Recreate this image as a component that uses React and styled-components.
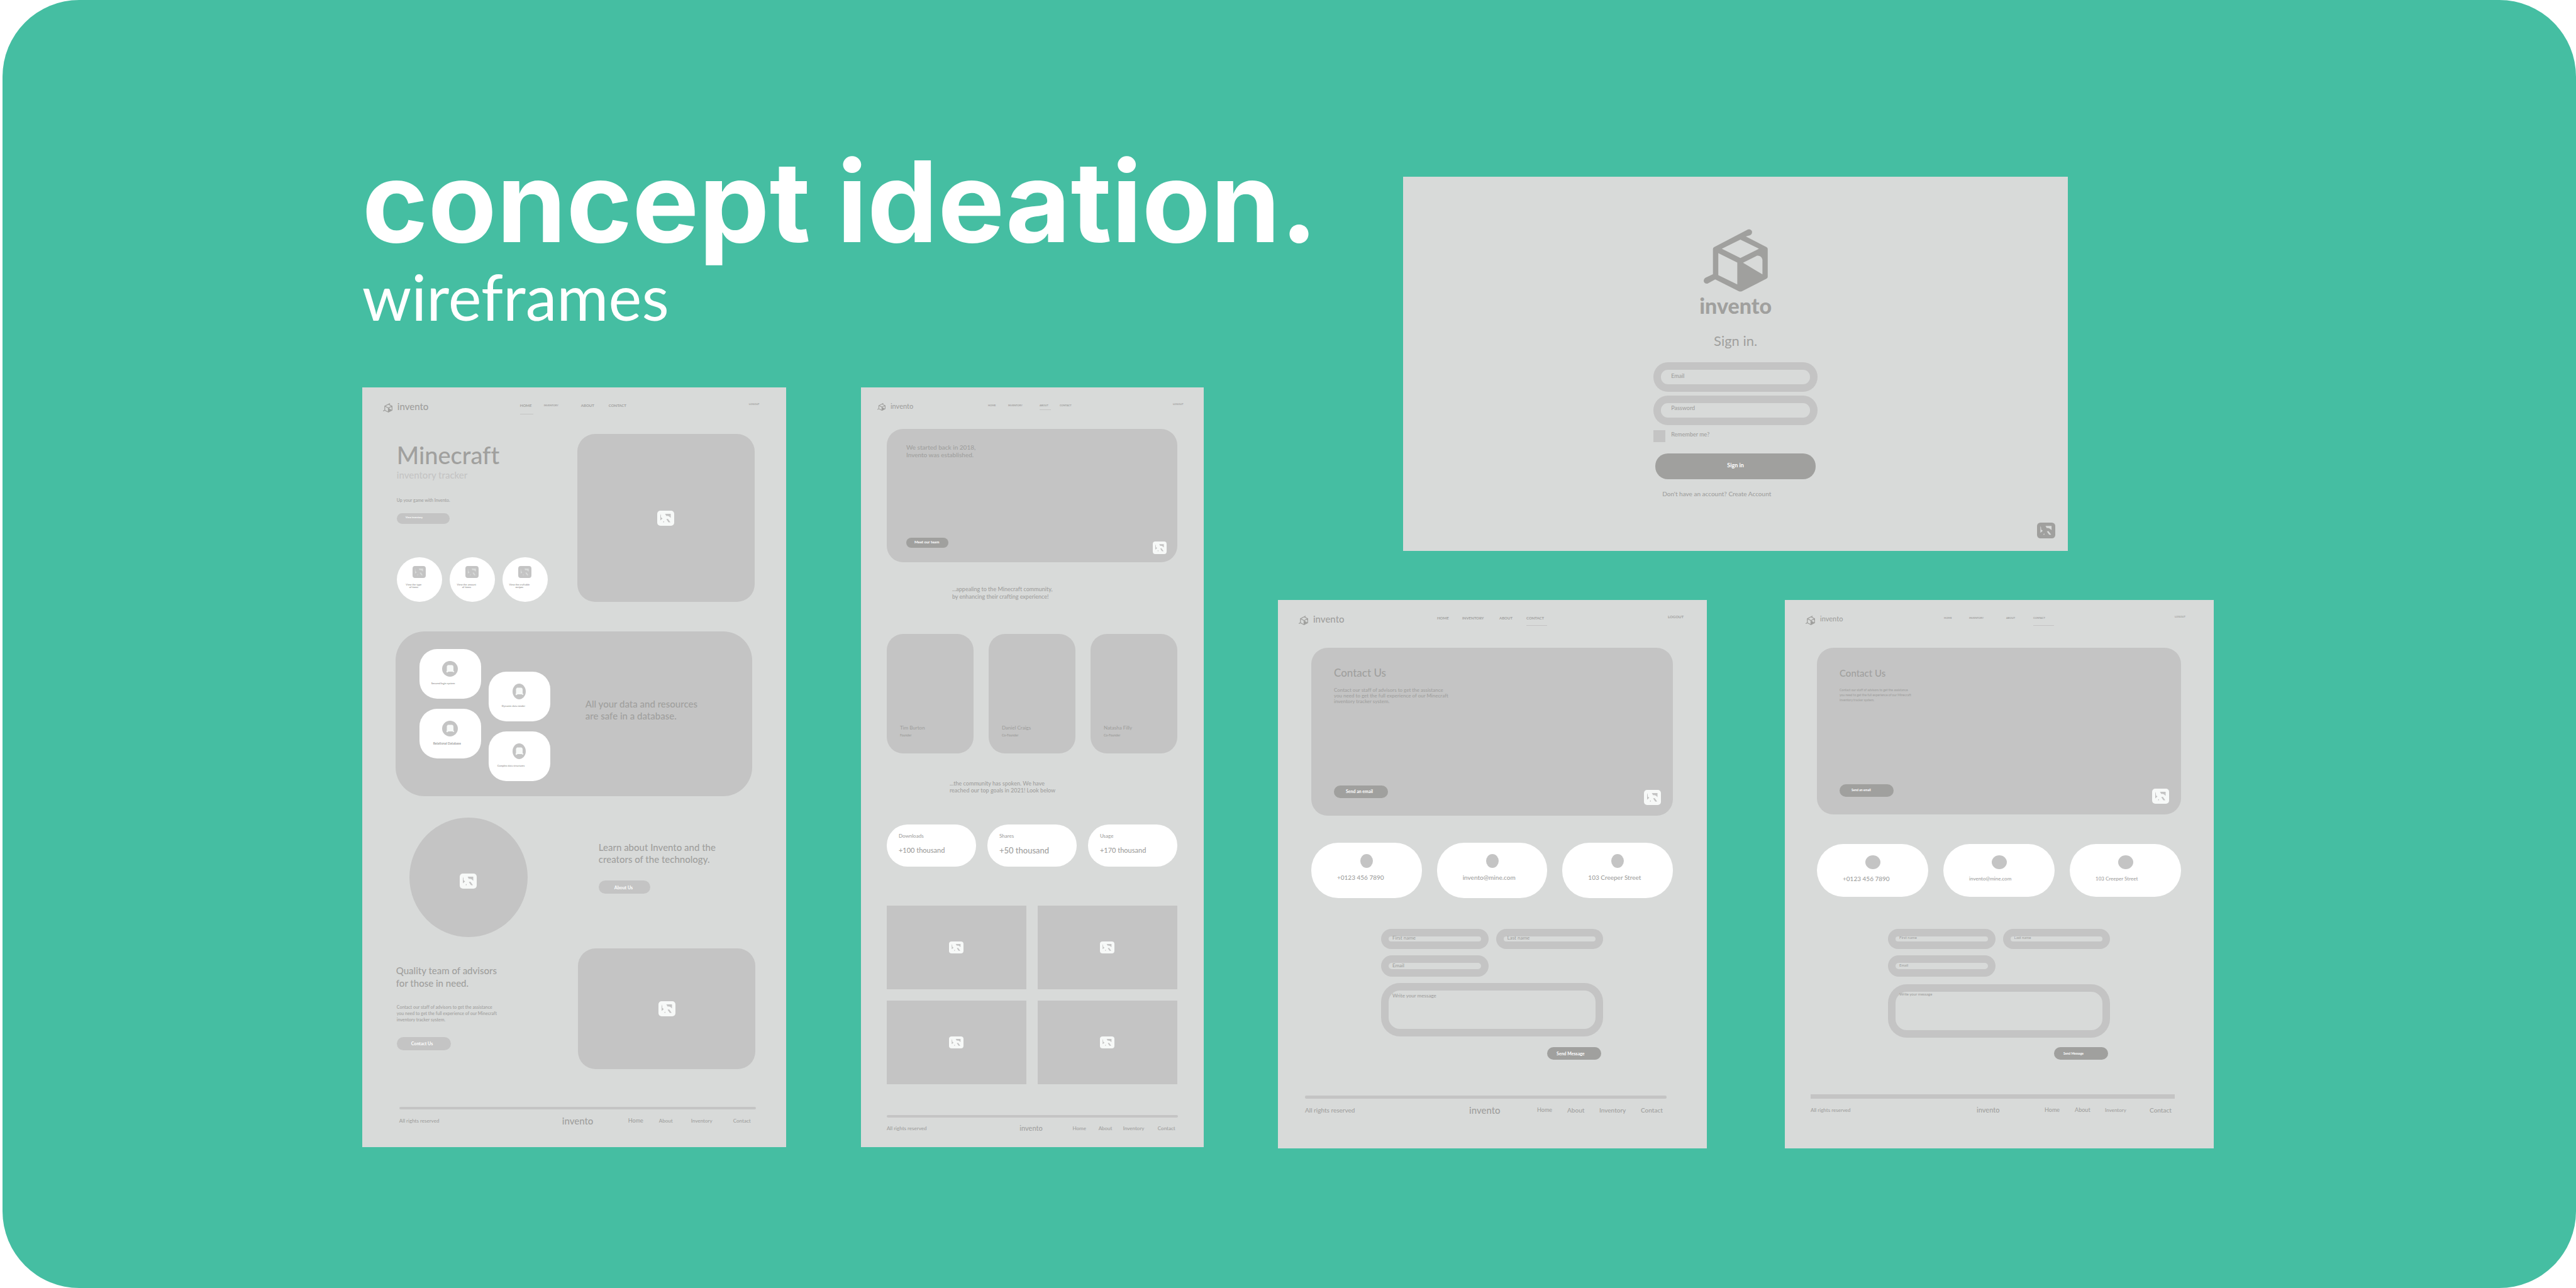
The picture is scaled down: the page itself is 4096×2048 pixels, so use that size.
import React from "react";
import styled, { createGlobalStyle, css } from "styled-components";

const c = {
  green: "#45bea2",
  sheet: "#d8dad9",
  block: "#c4c4c4",
  ink: "#a0a09e",
  soft: "#f7f9f8",
  white: "#ffffff",
};

const Global = createGlobalStyle`
  *, *::before, *::after { box-sizing: border-box; }
  body {
    margin: 0;
    background: ${c.white};
    color: ${c.ink};
    font-family: Lato, "Open Sans", sans-serif;
    font-weight: 500;
    font-variant-ligatures: none;
  }
  h1, h2, h3, p { margin: 0; font-weight: 500; }
  a { color: inherit; text-decoration: none; }
  button, input, textarea { font-family: inherit; font-weight: inherit; }
`;

/* ---------- poster ---------- */

const Poster = styled.main`
  display: grid;
  grid-template-columns: minmax(0, 1338fr) minmax(0, 1488fr);
  column-gap: 4.01%;
  min-height: 100vh;
  margin-left: 4px;
  padding: 0 14.06% 0 13.96%;
  background: ${c.green};
  border-radius: 122px;
`;

const LeftSide = styled.section`
  padding-top: 223px;
`;

const RightSide = styled.section`
  padding-top: 281px;
`;

const Header = styled.header`
  color: ${c.white};
  white-space: nowrap;
  margin-bottom: 93px;
`;

const Title = styled.h1`
  && { font-weight: 700; }
  font-family: Inter, Lato, sans-serif;
  font-size: 178px;
  line-height: 196px;
`;

const Subtitle = styled.p`
  && { font-weight: 400; }
  font-size: 100px;
  line-height: 104px;
`;

const LeftBoards = styled.div`
  display: grid;
  grid-template-columns: minmax(0, 674fr) minmax(0, 545fr);
  column-gap: 8.9%;
`;

const RightBoards = styled.div`
  display: grid;
  grid-template-columns: minmax(0, 1fr) minmax(0, 1fr);
  column-gap: 8.33%;
  margin-top: 78px;
`;

const Board = styled.article`
  display: flex;
  flex-direction: column;
  background: ${c.sheet};
`;

/* ---------- text ---------- */

const Text = styled.p`
  font-size: ${(p) => p.$size}px;
  line-height: ${(p) => p.$line}px;
  margin-top: ${(p) => p.$top || 0}px;
  padding-left: ${(p) => p.$indent || 0}px;
  color: ${(p) => p.$color || c.ink};
  white-space: pre-line;
  && { font-weight: ${(p) => p.$weight || 500}; }
`;

/* ---------- nav ---------- */

const NavBar = styled.nav`
  display: grid;
  grid-template-columns: ${(p) => p.$cols};
  align-items: start;
  height: ${(p) => p.$height}px;
  padding: 21px 0 0 ${(p) => p.$left}px;
`;

const Brand = styled.a`
  display: flex;
  align-items: flex-start;
  gap: 8px;
  font-size: ${(p) => p.$size}px;
  line-height: 18px;

  svg { margin-top: 4px; }
`;

const NavLink = styled.a`
  justify-self: start;
  margin-top: ${(p) => (p.$raised ? 2 : 4)}px;
  font-size: ${(p) => p.$size}px;
  line-height: 8px;
  font-weight: 700;
  ${(p) =>
    p.$active &&
    css`
      padding: 0 ${p.$extend}px ${p.$drop}px 0;
      border-bottom: 1px solid ${c.block};
    `}
`;

/* ---------- shared parts ---------- */

const Pill = styled.button`
  display: flex;
  align-items: center;
  align-self: ${(p) => p.$align || "flex-start"};
  width: ${(p) => p.$w}px;
  height: ${(p) => p.$h}px;
  margin: ${(p) => p.$margin || "0"};
  padding: 0 0 ${(p) => p.$lift || 0}px ${(p) => p.$left}px;
  border: 0;
  border-radius: ${(p) => p.$h / 2}px;
  background: ${(p) => (p.$dark ? c.ink : c.block)};
  color: ${c.white};
  font-size: ${(p) => p.$size}px;
  line-height: 10px;
  font-weight: 700;
  white-space: nowrap;
`;

const Picture = styled.div`
  display: flex;
  align-items: center;
  justify-content: center;
  height: ${(p) => p.$h}px;
  border-radius: ${(p) => p.$r || 0}px;
  background: ${c.block};
`;

const FooterBox = styled.footer`
  margin: ${(p) => p.$top}px ${(p) => p.$right}px ${(p) => p.$bottom}px ${(p) => p.$left}px;
`;

const Rule = styled.hr`
  height: ${(p) => p.$h}px;
  margin: 0 0 ${(p) => p.$gap}px;
  border: 0;
  border-radius: ${(p) => (p.$h > 5 ? 0 : 2)}px;
  background: ${c.block};
`;

const FooterRow = styled.div`
  display: grid;
  grid-template-columns: ${(p) => p.$cols};
  line-height: 18px;
  white-space: nowrap;
`;

const FooterItem = styled.a`
  font-size: ${(p) => p.$size}px;
`;

/* ---------- home board ---------- */

const HomeHero = styled.section`
  display: grid;
  grid-template-columns: 287fr 282fr;
  padding: 0 50px 0 55px;
`;

const Column = styled.div`
  display: flex;
  flex-direction: column;
  padding-top: ${(p) => p.$top}px;
`;

const Bubbles = styled.div`
  display: flex;
  gap: 12px;
  margin-top: 53px;
`;

const Bubble = styled.div`
  display: flex;
  flex-direction: column;
  align-items: center;
  width: 72px;
  height: 71px;
  padding-top: 14px;
  border-radius: 50%;
  background: ${c.white};
`;

const BubbleText = styled.p`
  margin-top: 9px;
  padding-right: 18px;
  font-size: 4px;
  line-height: 4px;
  text-align: center;
  white-space: pre;
  && { font-weight: 700; }
`;

const DataPanel = styled.section`
  display: flex;
  gap: 12px;
  height: 262px;
  margin: 47px 54px 0 53px;
  padding-left: 38px;
  border-radius: 46px;
  background: ${c.block};
`;

const TileColumn = styled.div`
  display: flex;
  flex-direction: column;
  gap: 16px;
  padding-top: ${(p) => p.$top}px;
`;

const Tile = styled.div`
  display: flex;
  flex-direction: column;
  align-items: center;
  width: 98px;
  height: 79px;
  padding-top: 19px;
  border-radius: 28px;
  background: ${c.white};
`;

const TileDisc = styled.span`
  display: flex;
  align-items: center;
  justify-content: center;
  width: ${(p) => p.$w}px;
  height: 25px;
  border-radius: 50%;
  background: ${c.block};
`;

const TileText = styled.p`
  align-self: flex-start;
  margin-top: 8px;
  padding-left: ${(p) => p.$left}px;
  font-size: ${(p) => p.$size}px;
  line-height: 6px;
  && { font-weight: 700; }
`;

const AboutRow = styled.section`
  display: flex;
  gap: 113px;
  margin-top: 34px;
  padding-left: 75px;
`;

const Disc = styled.div`
  display: flex;
  align-items: center;
  justify-content: center;
  width: 188px;
  height: 190px;
  padding-top: 11px;
  border-radius: 50%;
  background: ${c.block};
`;

const TeamRow = styled.section`
  display: grid;
  grid-template-columns: 290fr 282fr;
  margin-top: 18px;
  padding: 0 49px 0 54px;
`;

/* ---------- about and contact boards ---------- */

const Hero = styled.section`
  display: flex;
  flex-direction: column;
  justify-content: space-between;
  height: ${(p) => p.$h}px;
  margin: 0 ${(p) => p.$side + 1}px 0 ${(p) => p.$side}px;
  padding: ${(p) => p.$pad};
  border-radius: 26px;
  background: ${c.block};
`;

const HeroFoot = styled.div`
  display: flex;
  align-items: flex-end;
  justify-content: space-between;
`;

const Cards = styled.section`
  display: grid;
  grid-template-columns: repeat(${(p) => p.$n}, minmax(0, 1fr));
  gap: ${(p) => p.$gap}px;
  margin: ${(p) => p.$top}px ${(p) => p.$side + 1}px 0 ${(p) => p.$side}px;
`;

const Person = styled.div`
  display: flex;
  flex-direction: column;
  justify-content: flex-end;
  gap: 2px;
  height: 190px;
  padding: 0 0 25px 21px;
  border-radius: 26px;
  background: ${c.block};
`;

const Stat = styled.div`
  height: 67px;
  padding: 13px 0 0 19px;
  border-radius: 33px;
  background: ${c.white};
`;

const Contact = styled.div`
  display: flex;
  flex-direction: column;
  height: ${(p) => p.$h}px;
  padding-top: 18px;
  border-radius: 43px;
  background: ${c.white};
`;

const Dot = styled.span`
  align-self: center;
  width: ${(p) => p.$w}px;
  height: 22px;
  border-radius: 50%;
  background: ${c.block};
`;

const Form = styled.form`
  display: grid;
  grid-template-columns: 1fr 1fr;
  gap: 10px 12px;
  margin-top: ${(p) => p.$top}px;
  padding: 0 165px 0 164px;
`;

const ringed = css`
  width: 100%;
  border: 0;
  outline: 0;
  background: transparent;
  box-shadow: inset 0 0 0 12px ${c.block};
  color: ${c.ink};
  font-size: ${(p) => p.$size}px;
  &::placeholder { color: ${c.ink}; opacity: 1; }
`;

const Field = styled.input`
  ${ringed}
  height: ${(p) => p.$h}px;
  padding: 0 18px ${(p) => p.$lift}px ${(p) => p.$left || 18}px;
  border-radius: ${(p) => Math.min(p.$h / 2, 23)}px;
`;

const Message = styled.textarea`
  ${ringed}
  grid-column: 1 / -1;
  display: block;
  height: 85px;
  margin-top: ${(p) => p.$top}px;
  padding: ${(p) => p.$pad}px 18px;
  border-radius: 30px;
  line-height: 10px;
  resize: none;
`;

/* ---------- sign-in board ---------- */

const SignBoard = styled(Board)`
  align-items: center;
  width: 71%;
  margin-left: 13.4%;
  padding: 83px 20px 20px;
`;

const SignForm = styled.form`
  display: flex;
  flex-direction: column;
  gap: 6px;
  width: 261px;
  margin-top: 21px;
`;

const Remember = styled.label`
  display: flex;
  gap: 9px;
  margin-top: 2px;
  font-size: 9px;
  line-height: 14px;
`;

const Tick = styled.input`
  appearance: none;
  width: 19px;
  height: 19px;
  margin: 0;
  background: ${c.block};
`;

const SignButton = styled.button`
  height: 41px;
  margin: 12px 3px 0;
  padding: 0 0 4px;
  border: 0;
  border-radius: 20px;
  background: ${c.ink};
  color: ${c.white};
  font-size: 9px;
  && { font-weight: 700; }
`;

const Account = styled.p`
  margin: 11px 0 0 14px;
  font-size: 10px;
  line-height: 12px;
  white-space: nowrap;
`;

const Corner = styled.div`
  display: flex;
  align-self: flex-end;
  margin-top: 40px;
`;

/* ---------- drawings ---------- */

function Logo({ w, h }) {
  return (
    <svg width={w} height={h} viewBox="0 0 102 100" preserveAspectRatio="none" aria-hidden="true">
      <path
        fill={c.ink}
        fillRule="evenodd"
        d="M14.7 32Q14.7 30 16.4 29L70 .9Q74-.6 76.5 3Q78 8 74 10L67 12L100 29Q101.8 30 101.8 32V76Q101.8 78 100 79L61 99Q58.3 100 55.6 99L18.3 80.2L6 87Q1 87.5 0 83Q0 79 3 77.5L14.7 72ZM28.8 31.6L58.3 46.2L87.8 31.5L58.3 16.9ZM23.2 38.5V73.4L53.4 88.3V53.4ZM62.5 53.8L93.4 72.2V49Q92 42 85 42.5Z"
      />
    </svg>
  );
}

function ImageIcon({ w, h, fill = c.soft, mark = c.block }) {
  return (
    <svg width={w} height={h} viewBox="0 0 27 24" preserveAspectRatio="none" aria-hidden="true">
      <rect width="27" height="24" rx="5" fill={fill} />
      <path
        fill={mark}
        d="M5 5Q6.5 8 6 10.5L8.5 12.5L5 15.5ZM12.5 5H21.5V11.5Q18 7 14.5 8.5ZM14.5 13.5L17 13L21 18.5H18ZM9.5 17.5L11 16.5V18.5H9.5Z"
      />
    </svg>
  );
}

function DataIcon() {
  return (
    <svg width="14" height="13" viewBox="0 0 14 13" aria-hidden="true">
      <path fill={c.soft} d="M3 .5H10Q12 1 12 3.5V9.5L13.5 11L12 12L10.5 11H4L2 12.5L.5 11L1.5 9.5V2.5Z" />
    </svg>
  );
}

/* ---------- composed parts ---------- */

function Nav({ height, left, cols, brand, logo, links, active, extend, drop, logout }) {
  return (
    <NavBar $height={height} $left={left} $cols={cols}>
      <Brand href="#" $size={brand}>
        <Logo w={logo[0]} h={logo[1]} />
        invento
      </Brand>
      {["HOME", "INVENTORY", "ABOUT", "CONTACT"].map((name, i) => (
        <NavLink key={name} href="#" $size={links[i]} $active={name === active} $extend={extend} $drop={drop}>
          {name}
        </NavLink>
      ))}
      <NavLink href="#" $size={logout} $raised>
        LOGOUT
      </NavLink>
    </NavBar>
  );
}

function Footer({ top, right, bottom, left, rule, gap, cols, sizes }) {
  return (
    <FooterBox $top={top} $right={right} $bottom={bottom} $left={left}>
      <Rule $h={rule} $gap={gap} />
      <FooterRow $cols={cols}>
        {["All rights reserved", "invento", "Home", "About", "Inventory", "Contact"].map((name, i) =>
          i === 0 ? (
            <FooterItem as="span" key={name} $size={sizes[i]}>{name}</FooterItem>
          ) : (
            <FooterItem href="#" key={name} $size={sizes[i]}>{name}</FooterItem>
          )
        )}
      </FooterRow>
    </FooterBox>
  );
}

const STAFF =
  "Contact our staff of advisors to get the assistance\nyou need to get the full experience of our Minecraft\ninventory tracker system.";

function HomeBoard() {
  return (
    <Board>
      <Nav height={74} left={33} cols="218fr 38fr 59fr 44fr 223fr 59fr" brand={15} logo={[15, 15]}
        links={[6, 4, 6, 6]} active="HOME" extend={3} drop={9} logout={4} />
      <HomeHero>
        <Column $top={11}>
          <Text as="h2" $size={38} $line={44}>Minecraft</Text>
          <Text $size={15} $line={18} $top={1} $color={c.block}>inventory tracker</Text>
          <Text $size={7} $line={10} $top={26}>Up your game with Invento.</Text>
          <Pill $w={84} $h={17} $left={14} $lift={3} $size={4} $margin="16px 0 0">View inventory</Pill>
          <Bubbles>
            {["View the type\nof items", "View the amount\nof items", "View the craftable\nrecipes"].map((t) => (
              <Bubble key={t}>
                <ImageIcon w={21} h={19} fill={c.block} mark={c.sheet} />
                <BubbleText>{t}</BubbleText>
              </Bubble>
            ))}
          </Bubbles>
        </Column>
        <Picture $h={267} $r={28}><ImageIcon w={27} h={24} /></Picture>
      </HomeHero>
      <DataPanel>
        <TileColumn $top={28}>
          <Tile>
            <TileDisc $w={25}><DataIcon /></TileDisc>
            <TileText $left={19} $size={4}>Secured login system</TileText>
          </Tile>
          <Tile>
            <TileDisc $w={25}><DataIcon /></TileDisc>
            <TileText $left={22} $size={5}>Relational Database</TileText>
          </Tile>
        </TileColumn>
        <TileColumn $top={64}>
          <Tile>
            <TileDisc $w={21}><DataIcon /></TileDisc>
            <TileText $left={21} $size={4}>Dynamic data render</TileText>
          </Tile>
          <Tile>
            <TileDisc $w={21}><DataIcon /></TileDisc>
            <TileText $left={14} $size={4}>Complex data structures</TileText>
          </Tile>
        </TileColumn>
        <Text as="h3" $size={15} $line={19} $top={106} $indent={44}>{"All your data and resources\nare safe in a database."}</Text>
      </DataPanel>
      <AboutRow>
        <Disc><ImageIcon w={27} h={24} /></Disc>
        <Column $top={38}>
          <Text as="h3" $size={15} $line={19}>{"Learn about Invento and the\ncreators of the technology."}</Text>
          <Pill $w={82} $h={21} $left={25} $size={7} $margin="24px 0 0">About Us</Pill>
        </Column>
      </AboutRow>
      <TeamRow>
        <Column $top={25}>
          <Text as="h3" $size={15} $line={20}>{"Quality team of advisors\nfor those in need."}</Text>
          <Text $size={7} $line={10} $top={23} $indent={1}>{STAFF}</Text>
          <Pill $w={86} $h={21} $left={23} $lift={2} $size={7} $margin="23px 0 0 1px">Contact Us</Pill>
        </Column>
        <Picture $h={192} $r={28}><ImageIcon w={27} h={24} /></Picture>
      </TeamRow>
      <Footer top={60} right={48} bottom={33} left={59} rule={4} gap={9}
        cols="259fr 105fr 49fr 51fr 67fr 36fr" sizes={[8, 15, 9, 8, 8, 8]} />
    </Board>
  );
}

function AboutBoard() {
  return (
    <Board>
      <Nav height={66} left={26} cols="176fr 32fr 50fr 32fr 180fr 49fr" brand={11} logo={[13, 12]}
        links={[4, 4, 4, 4]} active="ABOUT" extend={4} drop={2} logout={4} />
      <Hero $h={212} $side={41} $pad="23px 17px 13px 31px">
        <Text as="h2" $size={10} $line={12}>{"We started back in 2018,\nInvento was established."}</Text>
        <HeroFoot>
          <Pill $dark $align="flex-end" $w={67} $h={16} $left={13} $lift={2} $size={6} $margin="0 0 10px">Meet our team</Pill>
          <ImageIcon w={22} h={20} />
        </HeroFoot>
      </Hero>
      <Text $size={9} $line={12} $top={37} $indent={145}>{"...appealing to the Minecraft community,\nby enhancing their crafting experience!"}</Text>
      <Cards $n={3} $gap={24} $top={53} $side={41}>
        {[["Tim Burton", "Founder"], ["Daniel Craigs", "Co-Founder"], ["Natasha Filly", "Co-Founder"]].map(([n, r]) => (
          <Person key={n}>
            <Text $size={8} $line={12}>{n}</Text>
            <Text $size={5} $line={8} $weight={700}>{r}</Text>
          </Person>
        ))}
      </Cards>
      <Text $size={9} $line={11} $top={42} $indent={141}>{"...the community has spoken. We have\nreached our top goals in 2021! Look below"}</Text>
      <Cards $n={3} $gap={18} $top={49} $side={41}>
        {[["Downloads", "+100 thousand", 11], ["Shares", "+50 thousand", 13], ["Usage", "+170 thousand", 11]].map(([n, v, s]) => (
          <Stat key={n}>
            <Text $size={8} $line={10}>{n}</Text>
            <Text $size={s} $line={14} $top={11}>{v}</Text>
          </Stat>
        ))}
      </Cards>
      <Cards $n={2} $gap={18} $top={62} $side={41}>
        {[0, 1, 2, 3].map((i) => (
          <Picture key={i} $h={133}><ImageIcon w={23} h={19} /></Picture>
        ))}
      </Cards>
      <Footer top={49} right={41} bottom={20} left={41} rule={4} gap={8}
        cols="211fr 84fr 41fr 39fr 55fr 32fr" sizes={[8, 11, 8, 8, 8, 8]} />
    </Board>
  );
}

const LARGE = {
  brand: 15, nav: 6, side: 53, heroH: 267, title: 17, para: 8, paraLine: 9, button: 7,
  cardsTop: 43, cardH: 88, dot: 20, contacts: [10, 10, 10], extend: 5,
  formTop: 49, field: 8, lift: 4, messageTop: 0, messagePad: 15, sendTop: 17,
  footerTop: 57, rule: 5, left: 43, right: 64,
  cols: "261fr 108fr 48fr 51fr 66fr 41fr", footer: [10, 15, 9, 10, 10, 10],
};

const SMALL = {
  brand: 11, nav: 4, side: 51, heroH: 265, title: 15, para: 5, paraLine: 8, button: 5,
  cardsTop: 47, cardH: 84, dot: 24, contacts: [10, 8, 8], extend: 14,
  formTop: 51, field: 6, lift: 6, messageTop: 2, messagePad: 11, sendTop: 15,
  footerTop: 55, rule: 7, left: 41, right: 62,
  cols: "264fr 108fr 48fr 48fr 71fr 40fr", footer: [8, 11, 9, 9, 8, 10],
};

function ContactBoard({ s }) {
  const values = ["+0123 456 7890", "invento@mine.com", "103 Creeper Street"];
  return (
    <Board>
      <Nav height={76} left={33} cols="220fr 40fr 59fr 43fr 225fr 62fr" brand={s.brand} logo={[15, 15]}
        links={[s.nav, s.nav, s.nav, s.nav]} active="CONTACT" extend={s.extend} drop={7} logout={s.nav} />
      <Hero $h={s.heroH} $side={s.side} $pad="30px 19px 17px 36px">
        <div>
          <Text as="h2" $size={s.title} $line={20}>Contact Us</Text>
          <Text $size={s.para} $line={s.paraLine} $top={13}>{STAFF}</Text>
        </div>
        <HeroFoot>
          <Pill $dark $align="flex-end" $w={86} $h={20} $left={19} $lift={2} $size={s.button} $margin="0 0 11px">Send an email</Pill>
          <ImageIcon w={27} h={24} />
        </HeroFoot>
      </Hero>
      <Cards $n={3} $gap={24} $top={s.cardsTop} $side={s.side}>
        {values.map((v, i) => (
          <Contact key={v} $h={s.cardH}>
            <Dot $w={s.dot} />
            <Text $size={s.contacts[i]} $line={12} $top={9} $indent={41}>{v}</Text>
          </Contact>
        ))}
      </Cards>
      <Form $top={s.formTop} onSubmit={(e) => e.preventDefault()}>
        <Field $h={32} $size={s.field} $lift={s.lift} aria-label="First name" placeholder="First name" />
        <Field $h={32} $size={s.field} $lift={s.lift} aria-label="Last name" placeholder="Last name" />
        <Field $h={34} $size={s.field} $lift={s.lift - 2} type="email" aria-label="Email" placeholder="Email" />
        <Message $size={s.field} $top={s.messageTop} $pad={s.messagePad} aria-label="Write your message" placeholder="Write your message" />
      </Form>
      <Pill $dark $align="flex-end" $w={86} $h={20} $left={15} $lift={1} $size={s.button}
        $margin={`${s.sendTop}px 168px 0 0`}>Send Message</Pill>
      <Footer top={s.footerTop} right={s.right} bottom={52} left={s.left} rule={s.rule} gap={9}
        cols={s.cols} sizes={s.footer} />
    </Board>
  );
}

function SignInBoard() {
  return (
    <SignBoard>
      <Logo w={102} h={100} />
      <Text as="h2" $size={34} $line={38} $top={3} $weight={900}>invento</Text>
      <Text as="h3" $size={22} $line={26} $top={24} $weight={400}>Sign in.</Text>
      <SignForm onSubmit={(e) => e.preventDefault()}>
        <Field $h={47} $size={9} $lift={4} $left={28} type="email" aria-label="Email" placeholder="Email" />
        <Field $h={47} $size={9} $lift={8} $left={28} type="password" aria-label="Password" placeholder="Password" />
        <Remember>
          <Tick type="checkbox" />
          Remember me?
        </Remember>
        <SignButton>Sign in</SignButton>
        <Account>
          Don't have an account? <a href="#">Create Account</a>
        </Account>
      </SignForm>
      <Corner><ImageIcon w={29} h={25} fill={c.ink} mark={c.sheet} /></Corner>
    </SignBoard>
  );
}

export default function App() {
  return (
    <>
      <Global />
      <Poster>
        <LeftSide>
          <Header>
            <Title>concept ideation.</Title>
            <Subtitle>wireframes</Subtitle>
          </Header>
          <LeftBoards>
            <HomeBoard />
            <AboutBoard />
          </LeftBoards>
        </LeftSide>
        <RightSide>
          <SignInBoard />
          <RightBoards>
            <ContactBoard s={LARGE} />
            <ContactBoard s={SMALL} />
          </RightBoards>
        </RightSide>
      </Poster>
    </>
  );
}
